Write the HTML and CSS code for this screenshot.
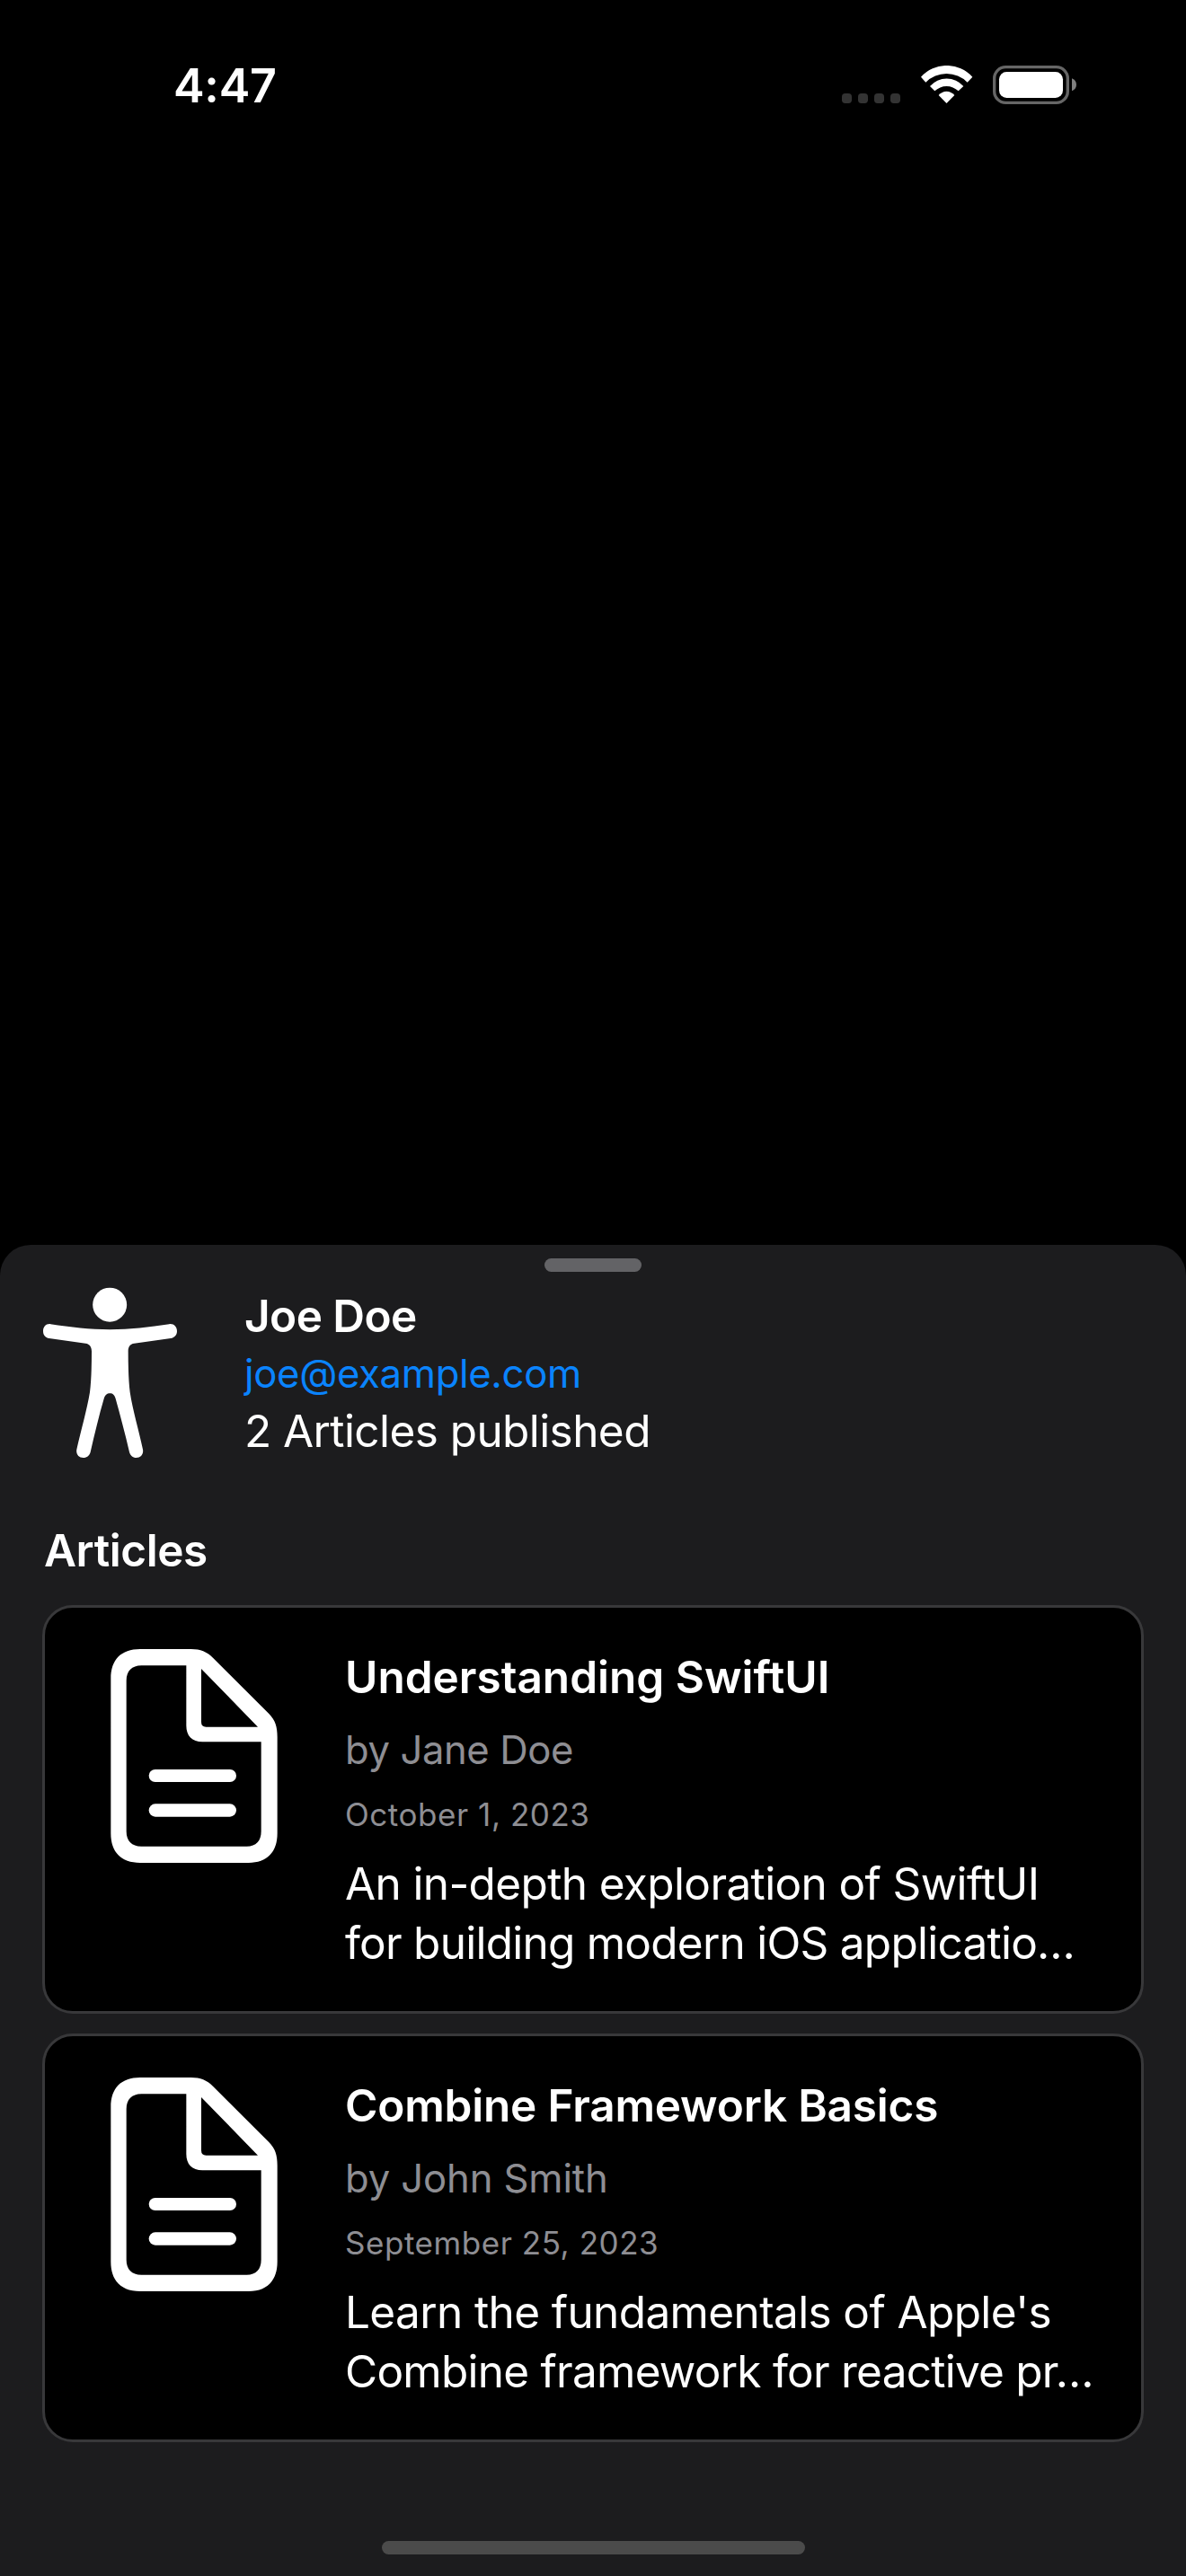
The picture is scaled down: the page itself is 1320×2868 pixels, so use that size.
FILE: index.html
```html
<!DOCTYPE html>
<html lang="en">
<head>
<meta charset="utf-8">
<title>Joe Doe</title>
<link rel="stylesheet" href="styles.css">
</head>
<body>
<svg class="defs" width="0" height="0" aria-hidden="true">
  <symbol id="doc" viewBox="279 468 558 714">
    <path fill-rule="evenodd" d="M378 468H548C580 468 600 477 621 497L808 684C829 706 836 726 836 762V1084C836 1146 802 1182 740 1182H378C314 1182 280 1146 280 1084V566C280 504 314 468 378 468ZM382 523C350 523 332 542 332 573V1077C332 1109 350 1127 382 1127H734C765 1127 782 1109 782 1077V778H586C551 778 532 758 532 724V523ZM582 534V712Q582 728 598 728H771Z"/>
    <rect x="407" y="870" width="292" height="42" rx="21"/>
    <rect x="407" y="985" width="292" height="43" rx="21.5"/>
  </symbol>
</svg>

<header class="status">
  <span class="time">4:47</span>
  <svg class="status-icons" viewBox="51 69 783 129" aria-hidden="true">
    <g fill="#333">
      <rect x="51" y="162" width="33" height="33" rx="11"/>
      <rect x="105" y="162" width="33" height="33" rx="11"/>
      <rect x="159" y="162" width="33" height="33" rx="11"/>
      <rect x="213" y="162" width="33" height="33" rx="11"/>
    </g>
    <g fill="#fff">
      <path d="M315 107A116 116 0 0 1 487 107L470 125A98 98 0 0 0 331 125Z"/>
      <path d="M345 138A74 74 0 0 1 457 138L440 154A57 57 0 0 0 361 154Z"/>
      <path d="M374 168A34 34 0 0 1 427 168L400.500 195Z"/>
      <rect x="576" y="90" width="213" height="87" rx="25"/>
    </g>
    <rect x="560" y="74" width="245" height="119" rx="38" fill="none" stroke="#666" stroke-width="10"/>
    <path d="M819 112C829 116 834 124 834 133S829 150 819 154Z" fill="#808080"/>
  </svg>
</header>

<main class="sheet">
  <div class="grabber"></div>

  <section class="profile">
    <svg class="figure" viewBox="144 189 450 570" aria-hidden="true">
      <circle cx="366.500" cy="248" r="57"/>
      <path d="M169 312.500C235 322 300 330.500 367 330.500S500 322 565 312.500C580 310.500 591 321 591 336C591 349 583 358 570 360L448 377C434 379 428 388 428 404C428 450 429 500 434 540C443 600 464 670 477 731C480 747 470 759 455 759C443 759 435 751 432 740C418 680 402 620 386 562C382 549 377 544 367 544S351 549 347 562C330 620 316 680 302 740C299 751 291 759 278 759C263 759 253 747 256 731C270 670 290 600 300 540C305 500 306 450 306 404C306 388 299 379 286 377L164 360C151 358 144 349 144 336C144 321 154 310.500 169 312.500Z"/>
    </svg>
    <div class="profile-text">
      <h1 class="name">Joe Doe</h1>
      <a class="email">joe@example.com</a>
      <p class="count">2 Articles published</p>
    </div>
  </section>

  <h2 class="heading">Articles</h2>

  <section class="cards">
    <article class="card">
      <svg class="doc" aria-hidden="true"><use href="#doc"/></svg>
      <div class="card-text">
        <h3 class="title">Understanding SwiftUI</h3>
        <p class="author">by Jane Doe</p>
        <p class="date">October 1, 2023</p>
        <p class="summary"><span class="line">An in-depth exploration of SwiftUI</span> <span class="line tight">for building modern iOS applicatio…</span></p>
      </div>
    </article>
    <article class="card">
      <svg class="doc" aria-hidden="true"><use href="#doc"/></svg>
      <div class="card-text">
        <h3 class="title snug">Combine Framework Basics</h3>
        <p class="author wide">by John Smith</p>
        <p class="date">September 25, 2023</p>
        <p class="summary"><span class="line">Learn the fundamentals of Apple's</span> <span class="line tight">Combine framework for reactive pr…</span></p>
      </div>
    </article>
  </section>

  <div class="home-indicator"></div>
</main>
</body>
</html>
```
FILE: styles.css
```css
* {
  box-sizing: border-box;
  margin: 0;
  padding: 0;
}

body {
  width: 1320px;
  height: 2868px;
  display: flex;
  flex-direction: column;
  overflow: hidden;
  background: #000;
  color: #fff;
  font-family: Inter, "Liberation Sans", sans-serif;
  font-size: 49.5px;
  line-height: 66px;
}

.defs {
  display: none;
}

h1, h2, h3 {
  font-size: inherit;
  font-weight: 600;
}

/* Status bar */
.status {
  display: flex;
  justify-content: space-between;
  align-items: flex-start;
  height: 1386px;
  padding: 61px 122px 0 193px;
}

.time {
  font-size: 52px;
  font-weight: 600;
  line-height: 70px;
  letter-spacing: -0.28px;
}

.status-icons {
  width: 261px;
  height: 43px;
  margin-top: 12px;
}

/* Bottom sheet */
.sheet {
  flex: 1;
  display: flex;
  flex-direction: column;
  padding: 15px 47px 24px;
  background: #1c1c1e;
  border-radius: 34px 34px 0 0;
}

.grabber {
  align-self: center;
  width: 108px;
  height: 15px;
  border-radius: 7.5px;
  background: #636366;
}

.profile {
  display: flex;
  gap: 74px;
  margin-top: 16px;
  padding-left: 1px;
}

.figure {
  width: 150px;
  height: 190px;
  margin-top: 1px;
  fill: #fff;
}

.profile-text {
  display: flex;
  flex-direction: column;
}

.name {
  letter-spacing: -0.57px;
}

.email {
  margin-top: 1px;
  color: #0a84ff;
  font-size: 43.6px;
  line-height: 61px;
  letter-spacing: -0.31px;
}

.count {
  letter-spacing: -0.58px;
}

.heading {
  margin: 67px 0 28px;
  padding-left: 2px;
  letter-spacing: -0.43px;
}

/* Article cards */
.cards {
  display: flex;
  flex-direction: column;
  gap: 22px;
}

.card {
  display: flex;
  gap: 75px;
  height: 455px;
  padding: 44px 0 0 73px;
  border: 3px solid #38383a;
  border-radius: 34px;
  background: #000;
}

.doc {
  flex: none;
  width: 186px;
  height: 238px;
  margin-top: 2px;
  fill: #fff;
}

.card-text {
  display: flex;
  flex-direction: column;
  white-space: nowrap;
}

.title.snug {
  letter-spacing: -0.2px;
}

.author {
  margin-top: 18px;
  color: #8e8e93;
  font-size: 43.6px;
  line-height: 61px;
  letter-spacing: -0.4px;
}

.author.wide {
  letter-spacing: -0.12px;
}

.date {
  margin-top: 17px;
  color: #8e8e93;
  font-size: 35px;
  line-height: 48px;
  letter-spacing: 0.55px;
}

.summary {
  margin-top: 20px;
  letter-spacing: -0.62px;
}

.line {
  display: block;
}

.line.tight {
  letter-spacing: -0.75px;
}

.home-indicator {
  align-self: center;
  width: 471px;
  height: 15px;
  margin-top: auto;
  border-radius: 7.5px;
  background: #4b4b4b;
}
```
